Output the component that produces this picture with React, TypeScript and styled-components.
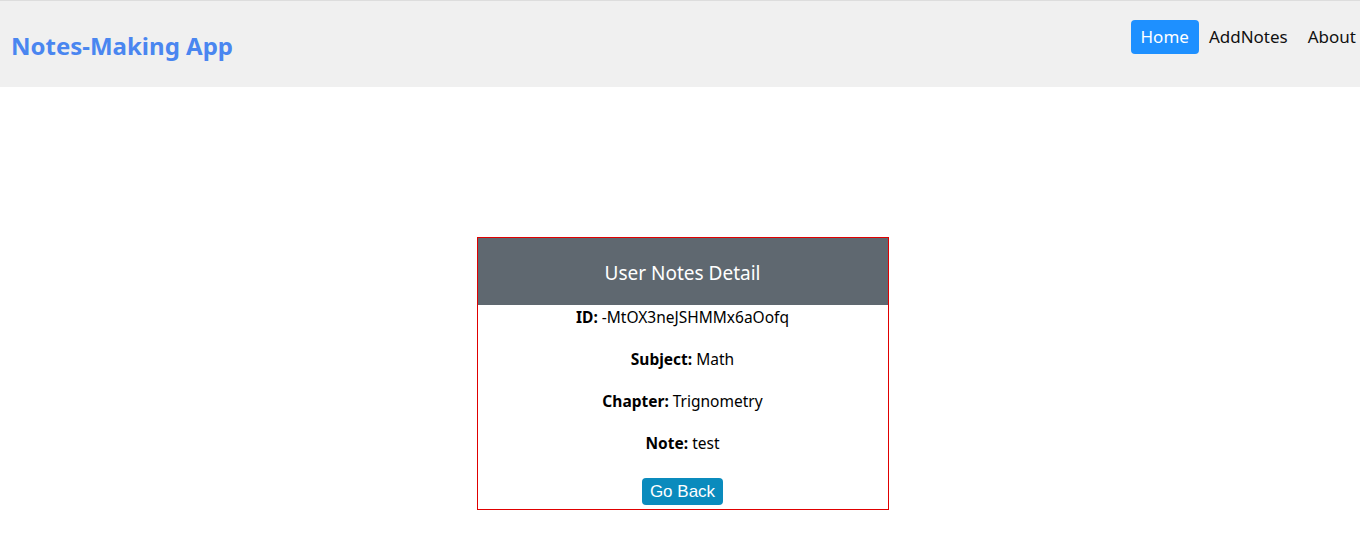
import styled, { createGlobalStyle } from 'styled-components'

const GlobalStyle = createGlobalStyle`
  body {
    margin : 0;
    font-family : "Segoe UI", "Noto Sans", sans-serif;
    background : white;
    color : black;
  }
`;

const Nav = styled.nav`
  height : 86px;
  background : #f0f0f0;
  border-top : 1px solid #dddddd;
  display : flex;
  align-items : center;
  justify-content : space-between;
  padding : 0 4px 0 11px;
`;

const Brand = styled.h1`
  margin : 0;
  color : #4a86f0;
  font-size : 24px;
  font-weight : 700;
  margin-top : 2px;
`;

const Links = styled.ul`
  list-style : none;
  margin : 0 0 14px 0;
  padding : 0;
  display : flex;
  align-items : center;
  gap : 10px;
`;

const NavLink = styled.li<{ $active?: boolean }>`
  font-size : 17px;
  padding : 4px ${p => p.$active ? '10px' : '0'};
  border-radius : 4px;
  background : ${p => p.$active ? '#1e90ff' : 'transparent'};
  color : ${p => p.$active ? 'white' : '#111'};
  margin-right : ${p => p.$active ? '0' : '10px'};
  line-height : 26px;
  &:last-child { margin-right : 0; }
`;

const Main = styled.main`
  padding-left : 5px;
`;

const Card = styled.section`
  width : 410px;
  margin : 150px auto 0;
  border : 1px solid #e00000;
  text-align : center;
  padding-bottom : 4px;
`;

const CardHeader = styled.h2`
  margin : 0;
  height : 67px;
  padding-top : 2px;
  box-sizing : border-box;
  background : #5f6870;
  color : white;
  font-size : 19px;
  font-weight : 400;
  display : flex;
  align-items : center;
  justify-content : center;
`;

const Row = styled.p`
  margin : 0 0 18px;
  font-size : 15.5px;
  line-height : 24px;
  b { font-weight : 700; }
`;

const BackButton = styled.button`
  margin-top : 5px;
  background : #0a8bbd;
  color : white;
  border : none;
  border-radius : 4px;
  font-family : "Liberation Sans", Arial, sans-serif;
  font-size : 17px;
  height : 27px;
  padding : 0 8px;
`;

export default function App() {
  const note = {
    id: '-MtOX3neJSHMMx6aOofq',
    subject: 'Math',
    chapter: 'Trignometry',
    note: 'test',
  };

  return (
    <>
      <GlobalStyle />
      <Nav>
        <Brand>Notes-Making App</Brand>
        <Links>
          <NavLink $active>Home</NavLink>
          <NavLink>AddNotes</NavLink>
          <NavLink>About</NavLink>
        </Links>
      </Nav>

      <Main>
        <Card>
          <CardHeader>User Notes Detail</CardHeader>
          <Row><b>ID:</b> {note.id}</Row>
          <Row><b>Subject:</b> {note.subject}</Row>
          <Row><b>Chapter:</b> {note.chapter}</Row>
          <Row><b>Note:</b> {note.note}</Row>
          <BackButton>Go Back</BackButton>
        </Card>
      </Main>
    </>
  )
}
